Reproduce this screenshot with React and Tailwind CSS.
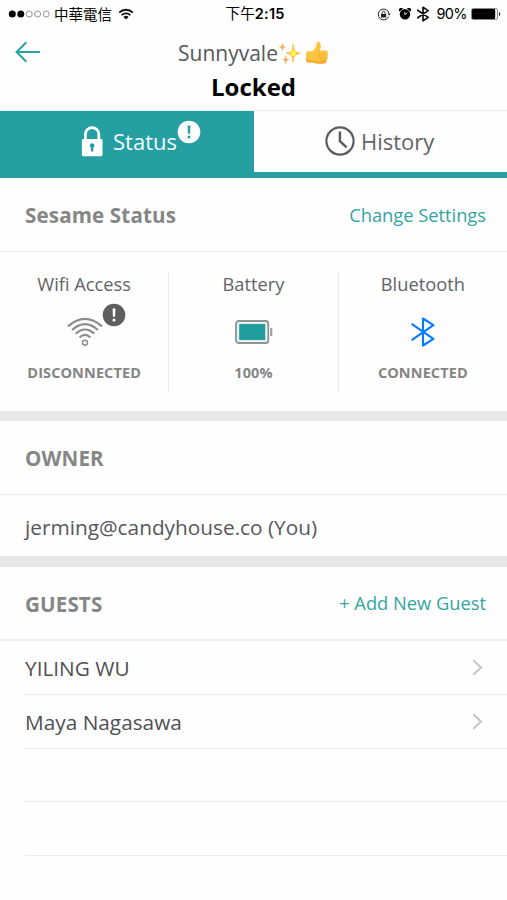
import React from "react";

function SignalDots() {
  return (
    <svg className="block" width="43" height="10" viewBox="0 0 43 10">
      <circle cx="4.3" cy="5" r="3.5" fill="#000" />
      <circle cx="12.8" cy="5" r="3.5" fill="#000" />
      <circle cx="21.2" cy="5" r="3" fill="none" stroke="#8a8a8a" strokeWidth="0.9" />
      <circle cx="29.6" cy="5" r="3" fill="none" stroke="#8a8a8a" strokeWidth="0.9" />
      <circle cx="38.2" cy="5" r="3" fill="none" stroke="#8a8a8a" strokeWidth="0.9" />
    </svg>
  );
}

function StatusWifi() {
  return (
    <svg className="block" width="16" height="12" viewBox="0 0 16 12" fill="none" stroke="#111" strokeWidth="1.9">
      <path d="M1.2 4.6 A9.7 9.7 0 0 1 14.8 4.6" />
      <path d="M3.7 7.1 A6.2 6.2 0 0 1 12.3 7.1" />
      <path d="M8 11.6 L5.4 9 A3.7 3.7 0 0 1 10.6 9 Z" fill="#111" stroke="none" />
    </svg>
  );
}

function RotationLock() {
  return (
    <svg className="block" width="14" height="13" viewBox="0 0 14 13" fill="none" stroke="#222">
      <path d="M11.6 8.6 A5.4 5.4 0 1 1 11.9 5.2" strokeWidth="1" />
      <path d="M10.6 5.4 H13.6 L12.1 7.8 Z" fill="#222" stroke="none" />
      <rect x="4" y="5.9" width="5.2" height="3.7" rx="0.4" fill="#222" stroke="none" />
      <path d="M5.1 6 V4.8 A1.5 1.5 0 0 1 8.1 4.8 V6" strokeWidth="0.9" />
    </svg>
  );
}

function AlarmClock() {
  return (
    <svg className="block" width="12" height="12" viewBox="0 0 12 12">
      <circle cx="6" cy="6.3" r="5.2" fill="#000" />
      <path d="M0.4 3.6 A2.3 2.3 0 0 1 4 0.7 Z M11.6 3.6 A2.3 2.3 0 0 0 8 0.7 Z" fill="#000" />
      <path d="M5.8 4.2 V6.6 L8.2 4.9" fill="none" stroke="#fff" strokeWidth="0.9" />
    </svg>
  );
}

function Sparkles() {
  return (
    <svg className="block" width="22" height="23" viewBox="0 0 22 23">
      <path d="M14.2 2.4 C14.8 8.6 15.4 10 21.2 11.3 C15.4 12.6 14.8 14 14.2 20.2 C13.6 14 13 12.6 7.2 11.3 C13 10 13.6 8.6 14.2 2.4Z" fill="#fdc53b" stroke="#fbbd48" strokeWidth="1" />
      <circle cx="14.2" cy="11.3" r="2.8" fill="#fff04a" />
      <path d="M3.4 1 C3.8 4 4.2 4.7 6.5 5.1 C4.2 5.6 3.8 6.3 3.4 9.3 C3 6.3 2.6 5.6 0.4 5.1 C2.6 4.7 3 4 3.4 1Z" fill="#f6a95a" stroke="#f6a95a" strokeWidth="0.4" />
      <path d="M6.8 13.3 C7.2 16.5 7.6 17.2 10 17.7 C7.6 18.2 7.2 18.9 6.8 22.1 C6.4 18.9 6 18.2 3.6 17.7 C6 17.2 6.4 16.5 6.8 13.3Z" fill="#f6a95a" stroke="#f6a95a" strokeWidth="0.4" />
    </svg>
  );
}

function ThumbsUp() {
  return (
    <svg className="block" width="24" height="24" viewBox="0 0 24 24">
      <path d="M1.2 12 C1.2 10.6 2.3 10.2 4 10.2 L7 10.4 C8.6 9.6 10.6 7.4 11.1 5.2 C11.5 3.1 11.3 1.1 13 1.1 C15.4 1.1 16 3.4 15.7 5.8 C15.5 7.2 15 8.4 14.7 9.5 H20.7 C22.3 9.5 23 10.5 22.9 11.6 C22.9 12.5 22.6 13 22.2 13.3 C23.1 14 23.2 15.7 22.2 16.7 C22.7 17.7 22.4 19 21.3 19.7 C21.5 21.2 20.6 22.4 18.6 22.5 C14 22.9 10.3 22.8 7.3 21.6 H3.3 C1.8 21.4 1.2 20.6 1.2 19 Z" fill="#fcc43c" />
      <path d="M1.2 17 C5 19.6 9 20.6 14 20.3 L21.3 19.7 C21.5 21.2 20.6 22.4 18.6 22.5 C14 22.9 10.3 22.8 7.3 21.6 H3.3 C1.8 21.4 1.2 20.6 1.2 19 Z" fill="#f4ac33" />
      <path d="M14.7 9.5 C13.8 11 13.8 12.4 14.8 13.3 H22.2 M14.8 13.3 C13.9 14.6 14.1 16 15 16.7 H22.2 M15 16.7 C14.4 17.9 14.7 19.1 15.6 19.7 H21.3" fill="none" stroke="#eda52e" strokeWidth="0.7" />
    </svg>
  );
}

function LockIcon() {
  return (
    <svg className="block" width="22" height="31" viewBox="0 0 22 31">
      <path d="M4.4 13.5 V8.3 A6.7 6.7 0 0 1 17.8 8.3 V13.5" fill="none" stroke="#fff" strokeWidth="2.7" />
      <rect x="0.9" y="13" width="20.6" height="17.2" rx="1.4" fill="#fff" />
      <path d="M11.1 17.2 a2.4 2.4 0 0 1 1.2 4.5 V25.4 H10 V21.7 A2.4 2.4 0 0 1 11.1 17.2Z" fill="#259fa1" />
    </svg>
  );
}

function ClockIcon() {
  return (
    <svg className="block" width="30" height="30" viewBox="0 0 30 30" fill="none" stroke="#5d5c5f" strokeWidth="2.2">
      <circle cx="15" cy="15" r="13.6" />
      <path d="M14.9 5.5 V15.2 L21.6 21.4" strokeWidth="2.5" />
    </svg>
  );
}

function AlertBadge({ circle, mark }) {
  return (
    <svg className="block" width="24" height="24" viewBox="0 0 24 24">
      <circle cx="12" cy="12" r="11.3" fill={circle} />
      <path d="M10.6 5.4 H13.4 L13.1 13.8 H10.9 Z" fill={mark} />
      <circle cx="12" cy="17" r="1.5" fill={mark} />
    </svg>
  );
}

function WifiIcon() {
  return (
    <svg className="block" width="36" height="30" viewBox="0 0 36 30" fill="none" stroke="#8c8c8c" strokeWidth="2.1">
      <path d="M1 9.4 Q18 -5.6 35 9.4" />
      <path d="M5 13 Q18 1.2 31 13" />
      <path d="M8.7 16.6 Q18 8.4 27.3 16.6" />
      <path d="M12.6 20.4 Q18 15.2 23.4 20.4" />
      <circle cx="18" cy="25.8" r="2.5" strokeWidth="1.4" />
    </svg>
  );
}

function BatteryIcon() {
  return (
    <svg className="block" width="38" height="24" viewBox="0 0 38 24">
      <rect x="1" y="1" width="32.3" height="22" rx="2.6" fill="#e6f2f0" stroke="#929292" strokeWidth="1.8" />
      <rect x="4.2" y="4" width="26" height="16" fill="#239e9f" />
      <rect x="35.2" y="8.2" width="2.1" height="7.8" fill="#9b9b9b" />
    </svg>
  );
}

function BluetoothIcon({ width, height, color, stroke }) {
  return (
    <svg className="block" width={width} height={height} viewBox="0 0 24 30" fill="none" stroke={color} strokeWidth={stroke} strokeLinejoin="round" strokeLinecap="round">
      <path d="M1.4 7.4 L22.4 21.8 L12 28.5 V1.5 L22.4 8.2 L1.4 22.6" />
    </svg>
  );
}

function Chevron() {
  return (
    <svg className="block" width="11" height="17" viewBox="0 0 11 17" fill="none" stroke="#c5c5c8" strokeWidth="2">
      <path d="M1.3 1.2 L9 8.5 L1.3 15.8" />
    </svg>
  );
}

function StatusBar() {
  return (
    <div className="flex h-[28px] items-center justify-between pl-[8px] pr-[6px] text-black">
      <div className="flex w-[190px] items-center">
        <SignalDots />
        <span className="ml-[3px] font-['Noto_Sans_CJK_TC',sans-serif] text-[14.5px] leading-[20px]">中華電信</span>
        <span className="ml-[6px]"><StatusWifi /></span>
      </div>
      <div className="ml-[1px] font-['Inter','Noto_Sans_CJK_TC',sans-serif] text-[14.5px] font-semibold leading-[20px] tracking-[0.2px]">
        <span className="font-normal">下午</span>2:15
      </div>
      <div className="flex w-[190px] items-center justify-end">
        <RotationLock />
        <span className="ml-[8px]"><AlarmClock /></span>
        <span className="ml-[6px]"><BluetoothIcon width={12} height={16} color="#111" stroke={3.4} /></span>
        <span className="ml-[7px] font-['Inter',sans-serif] text-[14.5px] leading-[20px] tracking-[-0.6px]">90%</span>
        <svg className="ml-[4px] block" width="30" height="12" viewBox="0 0 30 12">
          <rect x="0.5" y="0.5" width="26" height="11" rx="1.8" fill="#fff" stroke="#555" strokeWidth="0.7" />
          <rect x="1" y="1" width="23.2" height="10" rx="1" fill="#000" />
          <path d="M28 4 A2.4 2.4 0 0 1 28 8.2 Z" fill="#222" />
        </svg>
      </div>
    </div>
  );
}

function SectionHeader({ title, action, className }) {
  return (
    <div className={`flex items-center justify-between border-[#ededed] pl-[25px] pr-[21px] ${className}`}>
      <h2 className="pt-px text-[20.6px] font-bold leading-[28px] tracking-[0.13px] text-[#868686]">{title}</h2>
      {action && <button className="text-[18.3px] leading-[26px] text-[#33a5a2]">{action}</button>}
    </div>
  );
}

function Stat({ label, value, children }) {
  return (
    <div className="flex h-[120px] flex-1 flex-col items-center border-r border-[#ebebeb] last:border-r-0">
      <div className="text-[18.3px] leading-[24px] text-[#646468]">{label}</div>
      <div className="flex h-[67px] items-center justify-center pt-[4px]">{children}</div>
      <div className="text-[14.5px] font-bold leading-[20px] tracking-[0.1px] text-[#858585]">{value}</div>
    </div>
  );
}

const GUEST_ROWS = ["YILING WU", "Maya Nagasawa", "", ""];

export default function App() {
  return (
    <div className="h-[900px] w-[507px] overflow-hidden bg-[#fefefe] font-['Open_Sans',sans-serif]">
      <StatusBar />
      <header className="flex h-[83px] border-b border-[#efefef]">
        <div className="w-[70px] pl-[15px] pt-[13px]">
          <svg className="block" width="26" height="22" viewBox="0 0 26 22" fill="none" stroke="#27a4a7" strokeWidth="2">
            <path d="M11.3 1.2 L1.6 11 L11.3 20.8 M1.6 11 H25" />
          </svg>
        </div>
        <div className="flex flex-1 flex-col items-center">
          <div className="flex h-[50px] items-center">
            <span className="text-[21px] leading-[30px] text-[#57575b]">Sunnyvale</span>
            <span className="ml-[1px]"><Sparkles /></span>
            <span className="ml-[4px]"><ThumbsUp /></span>
          </div>
          <h1 className="-mt-[6px] text-[24px] font-bold leading-[30px] text-black">Locked</h1>
        </div>
        <div className="w-[70px]" />
      </header>

      <nav className="flex h-[67px] bg-[#259fa1]">
        <div className="flex w-[254px] pl-[81px]">
          <div className="pt-[15px]"><LockIcon /></div>
          <span className="ml-[10px] pt-[14px] text-[22px] leading-[32px] text-[#f2fbfb]">Status</span>
          <div className="pt-[9px]"><AlertBadge circle="#fff" mark="#259fa1" /></div>
        </div>
        <div className="flex h-[61px] flex-1 bg-[#fefefe] pl-[71px]">
          <div className="pt-[15px]"><ClockIcon /></div>
          <span className="ml-[6px] pt-[14px] text-[22px] leading-[32px] text-[#636367]">History</span>
        </div>
      </nav>

      <SectionHeader title="Sesame Status" action="Change Settings" className="h-[74px] border-b" />
      <div className="flex h-[159px] pt-[20px]">
        <Stat label="Wifi Access" value="DISCONNECTED">
          <div className="relative ml-[2px]">
            <WifiIcon />
            <div className="absolute -top-[14px] left-[35px]"><AlertBadge circle="#5f5f5f" mark="#fff" /></div>
          </div>
        </Stat>
        <Stat label="Battery" value="100%">
          <div className="ml-[2px]"><BatteryIcon /></div>
        </Stat>
        <Stat label="Bluetooth" value="CONNECTED">
          <BluetoothIcon width={24} height={30} color="#0a7cf8" stroke={2.2} />
        </Stat>
      </div>

      <div className="h-[10px] bg-[#e8e8e8]" />
      <SectionHeader title="OWNER" className="h-[74px] border-b" />
      <div className="flex h-[61px] items-center pl-[25px] pt-[2px] text-[20.8px] leading-[28px] text-[#57575c]">jerming@candyhouse.co (You)</div>
      <div className="h-[11px] bg-[#e8e8e8]" />
      <SectionHeader title="GUESTS" action="+ Add New Guest" className="h-[74px] border-b-2" />
      <div className="pl-[25px]">
        {GUEST_ROWS.map((name, i) => (
          <div key={i} className="flex h-[53.8px] items-center justify-between border-b border-[#ebebeb] pr-[24px]">
            <span className="pt-[2px] text-[20.8px] leading-[28px] text-[#505055]">{name}</span>
            {name && <Chevron />}
          </div>
        ))}
      </div>
    </div>
  );
}
